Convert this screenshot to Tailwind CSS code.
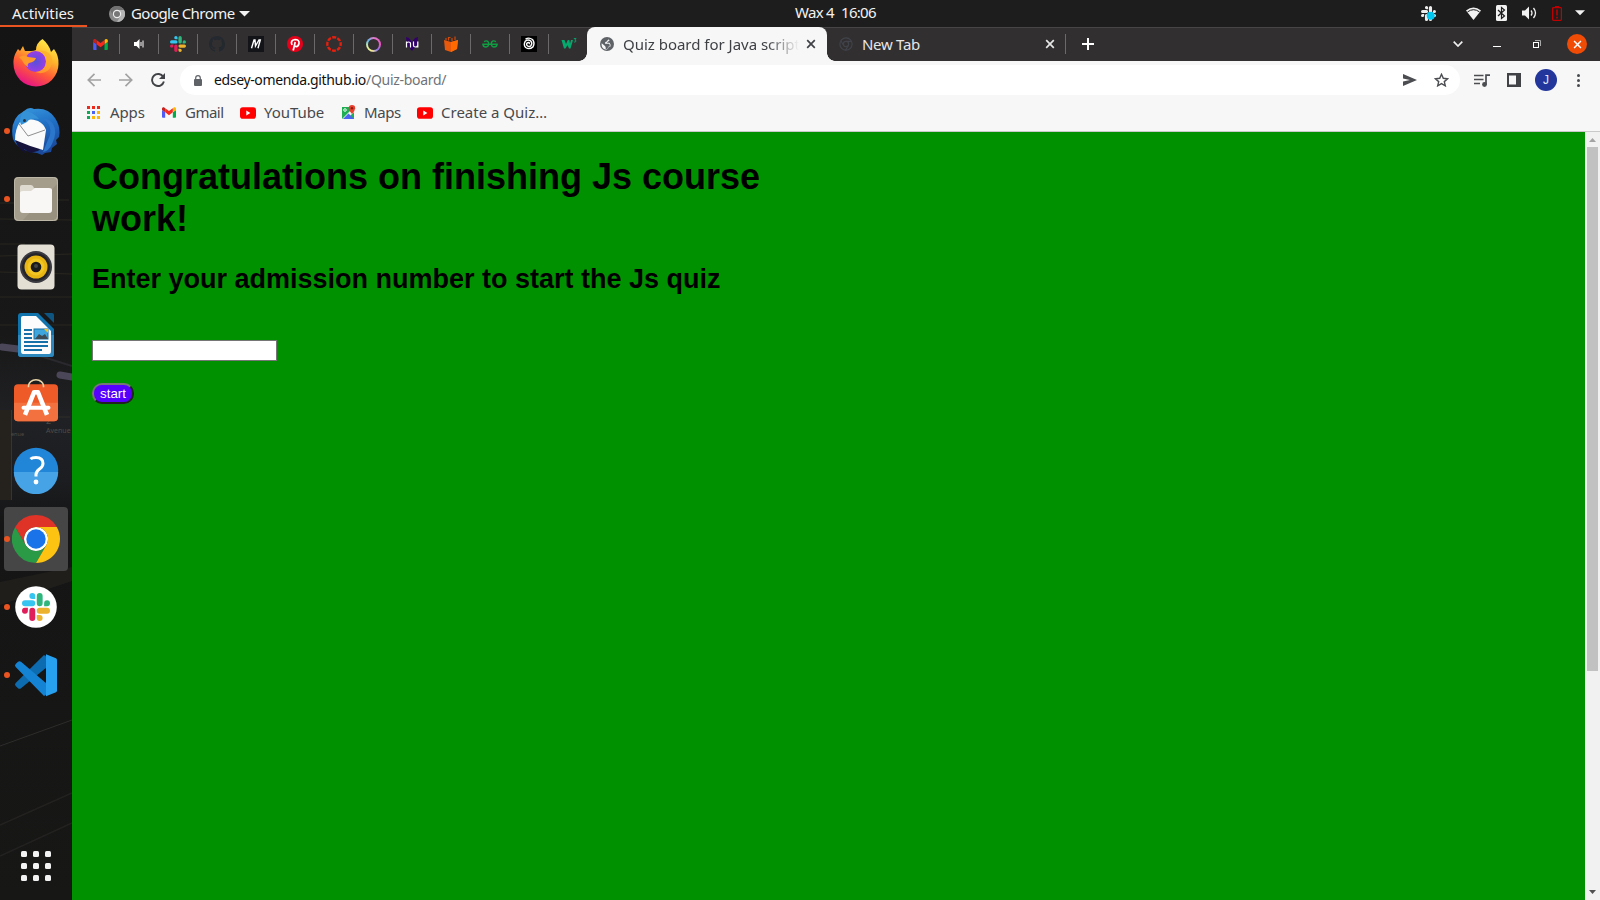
<!DOCTYPE html>
<html lang="en">
<head>
<meta charset="utf-8">
<title>Quiz board for Java script</title>
<script src="https://cdn.jsdelivr.net/npm/@tailwindcss/browser@4"></script>
</head>
<body class="w-[1600px] h-[900px] overflow-hidden flex flex-col bg-[#1d1d1d] font-['Noto_Sans',sans-serif] text-[15px] leading-5">

<svg class="hidden">
  <symbol id="gmail" viewBox="52 42 88 66"><path fill="#4f5bf5" d="M58 108h14V74L52 59v43c0 3.32 2.69 6 6 6"/><path fill="#00ac47" d="M120 108h14c3.32 0 6-2.69 6-6V59l-20 15"/><path fill="#ffba00" d="M120 48v26l20-15v-8c0-7.42-8.47-11.65-14.4-7.2"/><path fill="#f62a1f" d="M72 74V48l24 18 24-18v26L96 92"/><path fill="#c5221f" d="M52 51v8l20 15V48l-5.6-4.2c-5.94-4.45-14.4-.22-14.4 7.2"/></symbol>
  <symbol id="slackarm" viewBox="0 0 24 24"><path d="M5.042 15.165a2.528 2.528 0 0 1-2.52 2.523A2.528 2.528 0 0 1 0 15.165a2.527 2.527 0 0 1 2.522-2.52h2.52v2.52zM6.313 15.165a2.527 2.527 0 0 1 2.521-2.52 2.527 2.527 0 0 1 2.521 2.52v6.313A2.528 2.528 0 0 1 8.834 24a2.528 2.528 0 0 1-2.521-2.522v-6.313z"/></symbol>
  <symbol id="slack" viewBox="0 0 24 24"><use href="#slackarm" width="24" height="24" fill="#e01e5a"/><use href="#slackarm" width="24" height="24" fill="#36c5f0" transform="rotate(90 12 12)"/><use href="#slackarm" width="24" height="24" fill="#2eb67d" transform="rotate(180 12 12)"/><use href="#slackarm" width="24" height="24" fill="#ecb22e" transform="rotate(270 12 12)"/></symbol>
  <symbol id="youtube" viewBox="0 0 16 12"><rect width="16" height="11.5" y=".2" rx="2.8" fill="#f00"/><path d="M6.3 3.6v4.8L10.4 6z" fill="#fff"/></symbol>
  <symbol id="close" viewBox="0 0 10 10"><path d="M1.2 1.2l7.6 7.6M8.800 1.2l-7.600 7.600" stroke="currentColor" stroke-width="1.7" fill="none"/></symbol>
</svg>

<!-- System bar -->
<header class="h-[27px] shrink-0 flex items-center relative text-[#f2f2f2]">
  <div class="w-[87px] h-[27px] pl-3 border-b-2 border-[#e95420] leading-[27px] tracking-[-0.05px]">Activities</div>
  <svg class="ml-[22px] w-4 h-4" viewBox="0 0 16 16"><circle cx="8" cy="8" r="8" fill="#8a8a8a"/><path d="M8 4h7A8 8 0 0 0 1 4l3.500 6A4 4 0 0 1 8 4" fill="#717171"/><path d="M11.500 10 8 16A8 8 0 0 0 15 4H8" fill="#b4b4b4"/><circle cx="8" cy="8" r="4.200" fill="#eee"/><circle cx="8" cy="8" r="3" fill="#777"/></svg>
  <span class="ml-[6px] pb-px w-[104px] whitespace-nowrap tracking-[-0.55px] leading-[19px]">Google Chrome</span>
  <svg class="ml-[4px] w-[11px] h-[6px]" viewBox="0 0 11 6"><path d="M0 0h11L5.500 5.500z" fill="#f2f2f2"/></svg>
  <div class="absolute left-[795px] top-[2px] flex gap-[7px] whitespace-nowrap"><span class="w-[39px] tracking-[-0.7px]">Wax 4</span><span class="tracking-[-0.7px]">16:06</span></div>
  <div class="ml-auto mr-[15px] flex items-center pb-px">
    <svg class="w-[15px] h-[15px] mr-[30px]" viewBox="0 0 24 24" fill="#ededed"><use href="#slackarm" width="24" height="24"/><use href="#slackarm" width="24" height="24" transform="rotate(90 12 12)"/><use href="#slackarm" width="24" height="24" transform="rotate(180 12 12)"/><use href="#slackarm" width="24" height="24" transform="rotate(270 12 12)"/><circle cx="15.500" cy="15.500" r="6.400" fill="#00c8f0"/></svg>
    <svg class="w-[15px] h-[13px] mr-[15px]" viewBox="0 0 15 13"><path d="M0 3.500Q7.500-2.500 15 3.500L7.500 13z" fill="#f2f2f2"/><path d="M1.500 3.900Q7.500-.5 13.500 3.900" stroke="#1d1d1d" stroke-width="1" fill="none" transform="translate(0 1)"/></svg>
    <svg class="w-[11px] h-4 mr-[15px]" viewBox="0 0 11 16"><rect width="11" height="16" rx="1.500" fill="#f2f2f2"/><path d="M2 5l6.500 6L5.500 13.500V2.500L8.500 5 2 11" fill="none" stroke="#1d1d1d" stroke-width="1.200"/></svg>
    <svg class="w-[15px] h-[14px] mr-[15px]" viewBox="0 0 15 14"><path d="M0 4.500h3L7 .5v13L3 9.500H0z" fill="#f2f2f2"/><path d="M9 4.500q2 2.500 0 5M11.500 2q4 5 0 10" fill="none" stroke="#f2f2f2" stroke-width="1.300"/></svg>
    <svg class="w-[10px] h-[15px] mr-[13px]" viewBox="0 0 10 15"><path d="M3 0h4v1.500H3z" fill="#c00000"/><rect x=".6" y="1.600" width="8.800" height="12.800" rx=".8" fill="none" stroke="#c00000" stroke-width="1.200"/><path d="M5 3.500v6M5 10.800v1.600" stroke="#c00000" stroke-width="1.600"/></svg>
    <svg class="w-[10px] h-[6px]" viewBox="0 0 11 6"><path d="M0 0h11L5.500 5.500z" fill="#f2f2f2"/></svg>
  </div>
</header>

<div class="flex flex-1 min-h-0">
<!-- Dock -->
<nav class="w-[72px] h-[873px] shrink-0 relative bg-[#151515] flex flex-col items-center pt-[2px]">
  <svg class="absolute inset-0 w-[72px] h-[873px]" viewBox="0 0 72 873">
    <defs><linearGradient id="wall" x2="0" y2="1"><stop offset="0" stop-color="#141414"/><stop offset=".35" stop-color="#181818"/><stop offset=".45" stop-color="#202124"/><stop offset=".52" stop-color="#1b1d20"/><stop offset=".57" stop-color="#151515"/><stop offset="1" stop-color="#171716"/></linearGradient></defs>
    <rect width="72" height="873" fill="url(#wall)"/>
    <path d="M0 176h14M52 173h17M0 192l72 1M0 217h25M0 229l72-2M0 245l72 2M0 270h72M0 298h72" stroke="#28271f" stroke-width="1"/>
    <path d="M2 320l16 2M60 348l12 2" stroke="#4c4659" stroke-width="7" stroke-linecap="round"/>
    <path d="M18 322l54 17" stroke="#2a292e" stroke-width="2"/>
    <path d="M40 352v32M40 390h30" stroke="#302e2a" fill="none"/><path d="M0 383h12v90H0z" fill="#25221d"/><path d="M11.500 383v90" stroke="#3a342a"/>
    <text x="46" y="406" font-size="7" fill="#4f4c47">Avenue</text><text x="46" y="397" font-size="9" fill="#4f4c47">2</text><text x="11" y="409" font-size="5.500" fill="#4f4c47">enue</text>
    <path d="M0 555L72 540v14L0 578z" fill="#1f1e1b"/>
    <path d="M0 719l72-26" stroke="#2e2d2b" stroke-width="1"/><path d="M0 798l72-32M0 829l72-33" stroke="#232220" stroke-width="1.500"/>
  </svg>

  <div class="relative w-[72px] h-[68px] flex items-center justify-center">
    <svg class="w-12 h-12" viewBox="0 0 48 48"><defs><linearGradient id="ff" x1=".8" y1="0" x2=".3" y2="1"><stop offset="0" stop-color="#fff44f"/><stop offset=".35" stop-color="#ffb52b"/><stop offset=".65" stop-color="#ff5a36"/><stop offset="1" stop-color="#e5108c"/></linearGradient><radialGradient id="ffp"><stop offset="0" stop-color="#5551d8"/><stop offset="1" stop-color="#9a3de6"/></radialGradient></defs>
      <path d="M30.500 0C35 4 38 8 39 13l3-3q5 7 4.500 15A22.500 22.500 0 0 1 1.500 25C1 18 4 13 6 10l2 2 3-5 2 5h6q3 0 5-1 0-7 6.500-11z" fill="url(#ff)"/>
      <circle cx="23.500" cy="22.500" r="10.500" fill="url(#ffp)"/><path d="M7 18q6-3 9 0l8 1q-1 4-7 5-2 1-1 4-4-2-6-7z" fill="#ff9a2b"/><path d="M27 12c5 1 7 6 7 10 0 7-5 11-11 11 10 4 18-3 17-13-1-6-6-9-13-8z" fill="#ffac2b" opacity=".7"/></svg>
  </div>
  <div class="relative w-[72px] h-[68px] flex items-center justify-center">
    <i class="absolute left-1 top-[31px] w-[6px] h-[6px] rounded-full bg-[#e95420]"></i>
    <svg class="w-12 h-12" viewBox="0 0 48 48"><defs><linearGradient id="tb" x2=".3" y2="1"><stop offset="0" stop-color="#3b9be0"/><stop offset=".5" stop-color="#1f6fc4"/><stop offset="1" stop-color="#1b4a9c"/></linearGradient></defs>
      <path d="M12 4Q17-1 22 2q14-2 21 9 6 9 4 19l-3 3 1 4-5 4-1 4-6 1-3 2-5-2Q6 44 1 32-3 12 12 4z" fill="url(#tb)"/><path d="M3 31Q4 40 13 46l-1-4 6 4 8-2 5-5z" fill="#15123c"/><path d="M8 15Q16 10 26 14q6 3 8 9l-3 20Q17 39 3 33 3 22 8 15z" fill="#fafafa"/><path d="M7 17l9 12 17-6" fill="none" stroke="#8f8f8f" stroke-width="1"/><path d="M12 4q8 0 15 8Q18 10 15 15l-6 3Q6 12 12 4z" fill="#3592d6"/><circle cx="12.500" cy="13.500" r="1.500" fill="#26323f"/><path d="M30 12q10 4 8 16l-7 17q6-1 9-8 6-12 1-20-4-6-11-5z" fill="#2b77cb"/></svg>
  </div>
  <div class="relative w-[72px] h-[68px] flex items-center justify-center">
    <i class="absolute left-1 top-[31px] w-[6px] h-[6px] rounded-full bg-[#e95420]"></i>
    <svg class="w-12 h-12" viewBox="0 0 48 48"><rect x="2" y="2" width="44" height="44" rx="4" fill="#a49d8c"/><path d="M46 8v34q0 4-4 4H10z" fill="#989180"/><rect x="2.500" y="2.500" width="43" height="43" rx="4" fill="none" stroke="#bdb7a8"/><path d="M8 12q0-2 2-2h9q2 0 3 3h14v8H8z" fill="#dedad0"/><path d="M8 18q0-2 3-2h8l4-3h14q3 0 3 2v20q0 3-3 3H11q-3 0-3-3z" fill="#f8f7f5"/></svg>
  </div>
  <div class="relative w-[72px] h-[68px] flex items-center justify-center">
    <svg class="w-12 h-12" viewBox="0 0 48 48"><rect x="5.500" y="1.500" width="37" height="45" rx="4" fill="#e3dfd5"/><circle cx="24" cy="24" r="16" fill="#3a3a40"/><circle cx="24" cy="24" r="14" fill="#24242a"/><circle cx="24" cy="24" r="11.500" fill="#e8b512"/><circle cx="24" cy="24" r="8.500" fill="#f2c522"/><circle cx="24" cy="24" r="5.300" fill="#1b1b1b"/><circle cx="24" cy="23" r="2" fill="#444"/></svg>
  </div>
  <div class="relative w-[72px] h-[68px] flex items-center justify-center">
    <svg class="w-12 h-12" viewBox="0 0 48 48"><path d="M9 2h17l16 16v25q0 3-3 3H9q-3 0-3-3V5q0-3 3-3z" fill="#1173ac"/><path d="M6 24h36v19q0 3-3 3H9q-3 0-3-3z" fill="#2c88bd"/><path d="M11 5h13l15 15v20q0 3-2 3H11q-2 0-2-3V7q0-2 2-2z" fill="#fcfcfc"/><path d="M32 2h8q2 0 2 2v8z" fill="#0e5582"/><path d="M12 19h8M12 23h8M12 27h8M12 31h24M12 35h24M12 39h18" stroke="#1571a8" stroke-width="2"/><rect x="22" y="18" width="14" height="10" fill="#3ea6dd" stroke="#1571a8"/><path d="M23 28l4-5 3 2 3-2 3 5z" fill="#3e4b54"/><path d="M32 18h4v4z" fill="#f5c61d"/></svg>
  </div>
  <div class="relative w-[72px] h-[68px] flex items-center justify-center">
    <svg class="w-12 h-12 overflow-visible" viewBox="0 -.8 48 48"><rect x="2" y="4.500" width="44" height="37" rx="4" fill="#ee5b28"/><path d="M2 23h44v14.500q0 4-4 4H6q-4 0-4-4z" fill="#f2713f"/><path d="M16.500 7.500V6a7.500 6 0 0 1 15 0v1.500" fill="none" stroke="#e8d5a8" stroke-width="1.600"/><path d="M13 35l9-22.500h4L35 35" fill="none" stroke="#fff" stroke-width="4.500" stroke-linejoin="round"/><path d="M11.500 28h25" stroke="#fff" stroke-width="4" stroke-linecap="round"/></svg>
  </div>
  <div class="relative w-[72px] h-[68px] flex items-center justify-center pb-[2px]">
    <svg class="w-12 h-12" viewBox="0 0 48 48"><circle cx="24" cy="24" r="22.200" fill="#2186d8"/><path d="M1.800 26a22.200 22.200 0 0 0 44.400 0z" fill="#46a3e6"/><path d="M18.500 13q1.500-1.500 5.500-1.500 7 0 7 6 0 3-3.500 5.500t-3.500 5.500v2" fill="none" stroke="#fff" stroke-width="3"/><circle cx="24" cy="36" r="2.400" fill="#fff"/></svg>
  </div>
  <div class="relative w-[64px] h-[64px] my-[2px] rounded-[4px] bg-[#464646] flex items-center justify-center">
    <i class="absolute left-0 top-[29px] w-[6px] h-[6px] rounded-full bg-[#e95420]"></i>
    <svg class="w-12 h-12" viewBox="0 0 48 48"><circle cx="24" cy="24" r="12" fill="#fff"/><path d="M24 12h20.780A24 24 0 0 0 3.210 12l10.400 18A12 12 0 0 1 24 12" fill="#df3328"/><path d="M13.610 30 3.210 12A24 24 0 0 0 24 48l10.390-18A12 12 0 0 1 13.610 30" fill="#2a9a47"/><path d="M34.390 30 24 48A24 24 0 0 0 44.780 12H24a12 12 0 0 1 10.390 18" fill="#fcc313"/><circle cx="24" cy="24" r="9.700" fill="#1a73e8"/></svg>
  </div>
  <div class="relative w-[72px] h-[68px] flex items-center justify-center">
    <i class="absolute left-1 top-[31px] w-[6px] h-[6px] rounded-full bg-[#e95420]"></i>
    <svg class="w-12 h-12" viewBox="0 0 48 48"><circle cx="24" cy="24" r="20.800" fill="#fff"/><use href="#slack" x="10" y="10" width="28" height="28"/></svg>
  </div>
  <div class="relative w-[72px] h-[68px] flex items-center justify-center">
    <i class="absolute left-1 top-[31px] w-[6px] h-[6px] rounded-full bg-[#e95420]"></i>
    <svg class="w-12 h-12" viewBox="0 0 48 48"><path d="M3.700 32q-1.500 1.500 0 3L6 37.200q1.500 1.200 3 0L35 16V6l-3-2z" fill="#0d6cb0"/><path d="M3.700 16q-1.500-1.500 0-3L6 10.800q1.500-1.200 3 0L35 33v10l-3 2z" fill="#1583d3"/><path d="M34 3.200l10 4q1 .5 1 2v30q0 1.500-1 2l-10 4z" fill="#27a0f0"/></svg>
  </div>
  <svg class="mt-auto mb-[19px] w-[30px] h-[30px] relative" viewBox="0 0 30 30" fill="#f2f2f2"><rect width="6" height="6" rx="1.500"/><rect x="12" width="6" height="6" rx="1.500"/><rect x="24" width="6" height="6" rx="1.500"/><rect y="12" width="6" height="6" rx="1.500"/><rect x="12" y="12" width="6" height="6" rx="1.500"/><rect x="24" y="12" width="6" height="6" rx="1.500"/><rect y="24" width="6" height="6" rx="1.500"/><rect x="12" y="24" width="6" height="6" rx="1.500"/><rect x="24" y="24" width="6" height="6" rx="1.500"/></svg>
</nav>

<!-- Browser window -->
<main class="flex-1 min-w-0 flex flex-col">
  <!-- Tab strip -->
  <div class="h-[34px] shrink-0 bg-[#322f31] flex items-center pl-[9px] shadow-[inset_0_1px_0_#484547]">
    <div class="w-[39px] h-5 border-r border-[#6b696a] flex items-center justify-center"><svg class="w-[15px] h-[11px]"><use href="#gmail"/></svg></div>
    <div class="w-[39px] h-5 border-r border-[#6b696a] flex items-center justify-center"><svg class="w-[10px] h-[10px]" viewBox="0 0 10 10"><path d="M0 3h2.500L5.500 0v10L2.500 7H0z" fill="#fff"/><path d="M7 3v4M9 1.500v7" stroke="#fff"/></svg></div>
    <div class="w-[39px] h-5 border-r border-[#6b696a] flex items-center justify-center"><svg class="w-4 h-4"><use href="#slack"/></svg></div>
    <div class="w-[39px] h-5 border-r border-[#6b696a] flex items-center justify-center"><svg class="w-4 h-4" viewBox="0 0 16 16"><path fill="#24292f" d="M8 0C3.580 0 0 3.580 0 8c0 3.540 2.290 6.530 5.470 7.590.4.070.55-.17.55-.38 0-.19-.01-.82-.01-1.490-2.010.37-2.530-.49-2.690-.94-.09-.23-.48-.94-.82-1.130-.28-.15-.68-.52-.01-.53.63-.01 1.080.58 1.230.82.72 1.210 1.870.87 2.330.66.07-.52.28-.87.51-1.070-1.780-.2-3.640-.89-3.640-3.950 0-.87.31-1.590.82-2.150-.08-.2-.36-1.020.08-2.120 0 0 .67-.21 2.200.82.64-.18 1.320-.27 2-.27s1.360.09 2 .27c1.530-1.040 2.200-.82 2.200-.82.44 1.100.16 1.920.08 2.120.51.56.82 1.270.82 2.150 0 3.070-1.870 3.750-3.650 3.950.29.25.54.73.54 1.480 0 1.070-.01 1.930-.01 2.200 0 .21.15.46.55.38A8.010 8.010 0 0 0 16 8c0-4.420-3.580-8-8-8"/></svg></div>
    <div class="w-[39px] h-5 border-r border-[#6b696a] flex items-center justify-center"><svg class="w-4 h-4" viewBox="0 0 16 16"><rect width="16" height="16" fill="#131418"/><path d="M3.500 12.200L6 4h1l.5 6L11 4h1.300L10 12.200" fill="none" stroke="#fff" stroke-width="1.400"/></svg></div>
    <div class="w-[39px] h-5 border-r border-[#6b696a] flex items-center justify-center"><svg class="w-4 h-4" viewBox="0 0 16 16"><circle cx="8" cy="8" r="8" fill="#e60019"/><path d="M6.200 14.500L8.200 6M5 9Q3 4.200 8 3.500q4.500 0 4 4-.8 3.500-3.200 3-1.300-.3-1.500-1.500" fill="none" stroke="#fff" stroke-width="1.700"/></svg></div>
    <div class="w-[39px] h-5 border-r border-[#6b696a] flex items-center justify-center"><svg class="w-4 h-4" viewBox="0 0 16 16"><circle cx="8" cy="8" r="6.700" fill="none" stroke="#e4200f" stroke-width="2.400" stroke-dasharray="3.960 1.300" stroke-dashoffset="1.980"/></svg></div>
    <div class="w-[39px] h-5 border-r border-[#6b696a] flex items-center justify-center"><div class="w-[15px] h-[15px] rounded-full p-[2px] bg-[conic-gradient(#e07bc8,#ee55c8_25%,#8e7cf0_40%,#f3ec8c_55%,#d8f0a0_70%,#62b8e8_85%,#e07bc8)]"><div class="w-full h-full rounded-full bg-[#322f31]"></div></div></div>
    <div class="w-[39px] h-5 border-r border-[#6b696a] flex items-center justify-center"><svg class="w-4 h-4" viewBox="0 0 16 16"><path d="M2 1l3 1 3 4 3-4 3-1-1 8-5 6-5-6z" fill="#310069"/><path d="M2.500 11.500V5.500M2.500 7.500q0-1.500 2-1.500t2 1.500v4M9.500 5.500v4q0 1.500 2 1.500t2-1.500M13.800 5.500v6" fill="none" stroke="#fff" stroke-width="1.200"/></svg></div>
    <div class="w-[39px] h-5 border-r border-[#6b696a] flex items-center justify-center"><svg class="w-4 h-4" viewBox="0 0 16 16"><path d="M1 4l7 2 7-2-1 9-6 3-6-2z" fill="#e8590c"/><path d="M8 6l7-2-1 9-6 3z" fill="#ff6a00"/><path d="M3 4.500V2M5.500 4.500V1.500h2M9 5V2M12 4V.5" stroke="#d04a08" stroke-width="1.200" fill="none"/></svg></div>
    <div class="w-[39px] h-5 border-r border-[#6b696a] flex items-center justify-center"><svg class="w-4 h-4" viewBox="0 0 16 16" fill="none" stroke="#0f9d42" stroke-width="1.400"><path d="M.2 8.300h15.600M2 5.600q3.500-1.800 4.700 1.200.3 4-2.700 4.200Q1.200 11 .9 8.300M14 5.600q-3.500-1.800-4.700 1.200-.3 4 2.700 4.200 2.800 0 3.100-2.700"/></svg></div>
    <div class="w-[39px] h-5 border-r border-[#6b696a] flex items-center justify-center"><svg class="w-4 h-4" viewBox="0 0 16 16"><rect width="16" height="16" fill="#000"/><path d="M8 8q1-1.500-.7-1.500Q5 7 5.800 9.200q1.500 2.300 4 .6 2-2.500 0-4.800-3-2.200-5.600.3-2 3.500.5 6.200 3.500 2.500 7.300-.6 2.200-4-.5-7.400-3.500-2.600-7-.4" fill="none" stroke="#fff" stroke-width="1.400"/></svg></div>
    <div class="w-[39px] h-5 flex items-center justify-center"><svg class="w-4 h-4" viewBox="0 0 16 16"><path d="M.5 4h3L5 8l1.800-4h1.500L9 7.500 10 4h2L9.500 12.500H8L6.500 9l-2 3.500H3z" fill="#04aa6d"/><path d="M12.800 2.500h2.200l-1.200 1.600q1.600.2 1 1.500-.8 1-2 .2" fill="none" stroke="#04aa6d" stroke-width=".9"/></svg></div>
    <!-- Active tab -->
    <div class="relative w-[240px] h-[34px] ml-[-1px] rounded-t-[8px] bg-[#f7f7f7] flex items-center pl-[13px] text-[#3f4145]">
      <i class="absolute left-[-8px] bottom-0 w-2 h-2 bg-[radial-gradient(circle_at_0_0,#322f31_7.5px,#f7f7f7_8px)]"></i>
      <i class="absolute right-[-8px] bottom-0 w-2 h-2 bg-[radial-gradient(circle_at_100%_0,#322f31_7.5px,#f7f7f7_8px)]"></i>
      <svg class="w-[14px] h-[14px]" viewBox="0 0 14 14"><circle cx="7" cy="7" r="7" fill="#5f6368"/><path d="M8.700 1.700Q9 3.200 7.200 3.500 6.800 5 5.300 5l-.3 1.800h4q1.200.8.700 2.200-1.500.3-1.700 1.500-.5 1.500-1.500 1.700L5.700 12Q6 10 5 9L1.700 6.200Q1 10 4 12l2.500.8L8 11.500l.8-1.700 1.700-.3V7.500L9.500 5.800H6.800L8 4.500l1.500-.8z" fill="#f7f7f7"/></svg>
      <span class="ml-[9px] mb-px w-[176px] overflow-hidden whitespace-nowrap tracking-[-0.02px] [mask-image:linear-gradient(to_right,#000_82%,transparent)]">Quiz board for Java script</span>
      <svg class="ml-[7px] w-[10px] h-[10px]"><use href="#close"/></svg>
    </div>
    <div class="w-[239px] h-5 border-r border-[#6b696a] flex items-center pl-[12px] text-[#e6e6e6]">
      <svg class="w-[14px] h-[14px]" viewBox="0 0 48 48" fill="none" stroke="#40434a" stroke-width="4"><circle cx="24" cy="24" r="21"/><circle cx="24" cy="24" r="9"/><path d="M24 15h20M16 29L6 12M32 29L22 46"/></svg>
      <span class="ml-[9px] mb-px tracking-[-0.3px]">New Tab</span>
      <svg class="ml-auto mr-[10px] w-[10px] h-[10px]"><use href="#close"/></svg>
    </div>
    <svg class="ml-[16px] w-3 h-3" viewBox="0 0 12 12"><path d="M6 0v12M0 6h12" stroke="#fff" stroke-width="2"/></svg>
    <div class="ml-auto mr-[13px] flex items-center">
      <svg class="w-[10px] h-[6px] mr-[30px]" viewBox="0 0 10 6"><path d="M.7.7L5 5 9.300.7" fill="none" stroke="#f0f0f0" stroke-width="1.700"/></svg>
      <div class="w-2 h-px bg-white mt-[5px] mr-[32px]"></div>
      <svg class="w-2 h-2 mr-[26px]" viewBox="0 0 8 8"><path d="M2 .5h5.500V6" stroke="#aaa" fill="none"/><rect x=".5" y="2.500" width="5" height="5" fill="none" stroke="#fff"/></svg>
      <div class="w-5 h-5 rounded-full bg-[#f04c05] text-white flex items-center justify-center"><svg class="w-[9px] h-[9px]"><use href="#close"/></svg></div>
    </div>
  </div>

  <!-- Toolbar -->
  <div class="h-[38px] shrink-0 bg-[#f7f7f7] flex items-center pl-[15px] text-[#47494d]">
    <svg class="w-[14px] h-[14px]" viewBox="0 0 14 14"><path d="M14 7H1.500M7.500.8L1.300 7l6.200 6.200" fill="none" stroke="#a2a2a2" stroke-width="1.700"/></svg>
    <svg class="ml-[18px] w-[14px] h-[14px]" viewBox="0 0 14 14"><path d="M0 7h12.500M6.500.8L12.700 7l-6.200 6.200" fill="none" stroke="#a2a2a2" stroke-width="1.700"/></svg>
    <svg class="ml-[18px] w-[14px] h-[14px]" viewBox="0 0 14 14"><path d="M12.300 4A6 6 0 1 0 12.900 8.500" fill="none" stroke="#414245" stroke-width="1.900"/><path d="M14 0v6H8z" fill="#414245"/></svg>
    <div class="ml-[15px] w-[1280px] h-[30px] rounded-full bg-white flex items-center pl-[14px] text-[14px]">
      <svg class="w-[8px] h-[11px]" viewBox="0 0 8 11"><rect y="4" width="8" height="7" rx="1" fill="#5f6368"/><path d="M1.700 4.500V3a2.300 2.300 0 0 1 4.600 0v1.500" fill="none" stroke="#5f6368" stroke-width="1.200"/></svg>
      <span class="ml-[12px] w-[152px] tracking-[-0.36px] text-[#111]">edsey-omenda.github.io</span><span class="tracking-[-0.3px] text-[#6f7378]">/Quiz-board/</span>
      <svg class="ml-auto w-[14px] h-[12px]" viewBox="0 0 14 12"><path d="M0 0l14 6-14 6V7.500L7 6 0 4.500z" fill="#4b4d51"/></svg>
      <svg class="ml-[17px] mr-[11px] w-[15px] h-[14px]" viewBox="0 0 15 14"><path d="M7.500 1.300l1.800 4 4.300.4-3.300 2.900 1 4.200-3.800-2.200-3.800 2.200 1-4.200L1.400 5.700l4.300-.4z" fill="none" stroke="#4b4d51" stroke-width="1.400"/></svg>
    </div>
    <svg class="ml-[14px] w-4 h-[13px]" viewBox="0 0 16 13"><path d="M0 1.500h9.500M0 5.500h9.500M0 9.500h6" stroke="#4b4d51" stroke-width="1.500"/><path d="M12 10.500V1.200h4" fill="none" stroke="#4b4d51" stroke-width="1.700"/><circle cx="10.500" cy="10.500" r="2.400" fill="#4b4d51"/></svg>
    <svg class="ml-[17px] w-[14px] h-[14px]" viewBox="0 0 14 14"><path d="M0 0h14v14H0zM2 2.500v9h7v-9z" fill="#414245" fill-rule="evenodd"/></svg>
    <div class="ml-[14px] w-[22px] h-[22px] rounded-full bg-[#22369b] text-[#e4e7ff] text-[12px] leading-[22px] text-center font-['Liberation_Sans',sans-serif]">J</div>
    <svg class="ml-[20px] w-[3px] h-[13px]" viewBox="0 0 3 13" fill="#47494d"><circle cx="1.500" cy="1.500" r="1.500"/><circle cx="1.500" cy="6.500" r="1.500"/><circle cx="1.500" cy="11.500" r="1.500"/></svg>
  </div>

  <!-- Bookmarks -->
  <div class="h-[33px] shrink-0 bg-[#f7f7f7] border-b border-[#c9c9c9] flex items-center pl-[15px] pb-[5px] text-[#47494d] whitespace-nowrap">
    <svg class="w-[13px] h-[13px]" viewBox="0 0 13 13"><path d="M0 0h3v3H0zM5 0h3v3H5zM10 0h3v3h-3z" fill="#ee2a1c"/><path d="M0 5h3v3H0z" fill="#0fa958"/><path d="M5 5h3v3H5z" fill="#4a63f0"/><path d="M10 5h3v3h-3zM5 10h3v3H5zM10 10h3v3h-3z" fill="#fbb80b"/><path d="M0 10h3v3H0z" fill="#0fa958"/></svg>
    <span class="ml-[10px] w-[35px] mb-[2px] tracking-[-0.1px]">Apps</span>
    <svg class="ml-[17px] w-[14px] h-[11px]"><use href="#gmail"/></svg>
    <span class="ml-[9px] w-[39px] mb-[2px] tracking-[-0.5px]">Gmail</span>
    <svg class="ml-[16px] w-4 h-3"><use href="#youtube"/></svg>
    <span class="ml-[8px] w-[61px] mb-[2px] tracking-[-0.05px]">YouTube</span>
    <svg class="ml-[16px] w-[15px] h-[15px]" viewBox="0 0 15 15"><path d="M1 2h12v12H1z" fill="#1fae54"/><path d="M1 14l11-11 2 1v2l-9 9z" fill="#f3f3f3"/><path d="M7.500 8.500L13 14H2z" fill="#4a63f0"/><path d="M11 0a3.200 3.200 0 0 1 3.200 3.200Q14 6 11 9 8 6 7.800 3.200A3.200 3.200 0 0 1 11 0z" fill="#e8402f"/><circle cx="11" cy="3.200" r="1.200" fill="#8c1a12"/><circle cx="4" cy="5" r="1.300" fill="none" stroke="#fff" stroke-width=".9"/></svg>
    <span class="ml-[8px] w-[37px] mb-[2px] tracking-[-0.4px]">Maps</span>
    <svg class="ml-[16px] w-4 h-3"><use href="#youtube"/></svg>
    <span class="ml-[8px] mb-[2px]">Create a Quiz…</span>
  </div>

  <!-- Page -->
  <div class="flex-1 min-h-0 flex">
    <div class="flex-1 bg-[#009100] pl-5 pt-[24px] font-['Liberation_Sans',Arial,sans-serif] text-black">
      <h1 class="w-[700px] text-[36px] leading-[42px] font-bold">Congratulations on finishing Js course work!</h1>
      <h2 class="mt-[24px] text-[27px] leading-[31px] font-bold">Enter your admission number to start the Js quiz</h2>
      <input type="text" class="block mt-[45px] w-[185px] h-[21px] bg-white border border-[#767676]">
      <button class="block mt-[22px] w-[42px] h-[21px] rounded-[10px] border-2 border-t-[#767676] border-l-[#767676] border-r-[#212121] border-b-[#212121] bg-[#5500ff] text-white text-[13.333px] leading-[16px] text-center">start</button>
    </div>
    <div class="w-[15px] bg-[#f1f1f1] flex flex-col items-center">
      <svg class="mt-[6px] w-[7px] h-[4px]" viewBox="0 0 7 4"><path d="M0 4h7L3.500 0z" fill="#a3a3a3"/></svg>
      <div class="mt-[5px] w-[11px] h-[524px] bg-[#c1c1c1]"></div>
      <svg class="mt-auto mb-[6px] w-[7px] h-[4px]" viewBox="0 0 7 4"><path d="M0 0h7L3.500 4z" fill="#505050"/></svg>
    </div>
  </div>
</main>
</div>
</body>
</html>
